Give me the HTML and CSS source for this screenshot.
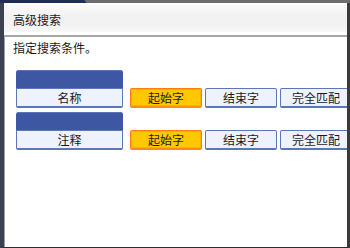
FILE: index.html
```html
<!DOCTYPE html>
<html lang="zh-CN">
<head>
<meta charset="utf-8">
<link rel="stylesheet" href="styles.css">
</head>
<body>
<div class="frame">
  <div class="topbar"><span class="topbar-dark"></span></div>
  <div class="window">
    <div class="title">高级搜索</div>
    <div class="content">
      <div class="prompt">指定搜索条件。</div>
      <div class="row">
        <div class="field">
          <div class="field-head"></div>
          <div class="btn field-btn">名称</div>
        </div>
        <div class="btn opt active">起始字</div>
        <div class="btn opt">结束字</div>
        <div class="btn opt">完全匹配</div>
      </div>
      <div class="row">
        <div class="field">
          <div class="field-head"></div>
          <div class="btn field-btn">注释</div>
        </div>
        <div class="btn opt active">起始字</div>
        <div class="btn opt">结束字</div>
        <div class="btn opt">完全匹配</div>
      </div>
    </div>
  </div>
</div>
</body>
</html>
```
FILE: styles.css
```css
html, body {
  margin: 0;
  padding: 0;
  width: 350px;
  height: 248px;
  overflow: hidden;
  background: #fff;
  font-family: "Noto Sans CJK SC", "Noto Sans", sans-serif;
  font-size: 12px;
  color: #1a1a1a;
}
.frame {
  width: 350px;
  height: 248px;
  display: flex;
  flex-direction: column;
  background: #4a4e58;
}
.topbar {
  height: 3px;
  background: #6e6e6e;
  display: flex;
}
.topbar-dark {
  width: 86px;
  background: #1f2d58;
  border-top-right-radius: 3px;
}
.window {
  flex: 1;
  display: flex;
  flex-direction: column;
  background: #fff;
  border-left: 4px solid #3b4152;
  border-right: 3px solid #3a3a3a;
  border-bottom: 1px solid #2e2e2e;
  box-shadow: inset 1px 0 0 #9aa0ac;
  overflow: hidden;
}
.title {
  height: 32px;
  flex: none;
  display: flex;
  align-items: center;
  padding-left: 9px;
  background: linear-gradient(#fbfbfb, #f2f2f2 40%, #f2f2f2 70%, #fafafa);
  border-bottom: 2px solid #a6a6a6;
  box-shadow: inset 0 2px 0 #ffffff, inset 0 -3px 0 #ffffff;
}
.content {
  padding: 2px 0 0 12px;
  display: flex;
  flex-direction: column;
}
.prompt {
  height: 18px;
  line-height: 18px;
  padding-left: -3px;
  margin-left: -3px;
  margin-bottom: 13px;
}
.row {
  display: flex;
  align-items: flex-end;
  margin-bottom: 4px;
}
.field {
  width: 107px;
  display: flex;
  flex-direction: column;
  margin-right: 7px;
  flex: none;
}
.field-head {
  height: 18px;
  background: #3d57a3;
  border-radius: 3px 3px 0 0;
  box-shadow: inset 0 1px 0 #5b72b8;
}
.btn {
  box-sizing: border-box;
  height: 20px;
  display: flex;
  align-items: center;
  justify-content: center;
  border: 1px solid #5a77b6;
  border-bottom: 2px solid #5a77b6;
  border-radius: 2px;
  background: #eef2fd;
  line-height: 1;
  flex: none;
}
.field-btn {
  border-radius: 0 0 2px 2px;
}
.opt {
  width: 72px;
  margin-right: 3px;
}
.opt:last-child {
  margin-right: 0;
}
.opt.active {
  background: #ffc800;
  border: 1px solid #ff7a10;
  border-bottom: 2px solid #ff8a1a;
  box-shadow: inset 0 0 0 1px #ffb000;
}
```
